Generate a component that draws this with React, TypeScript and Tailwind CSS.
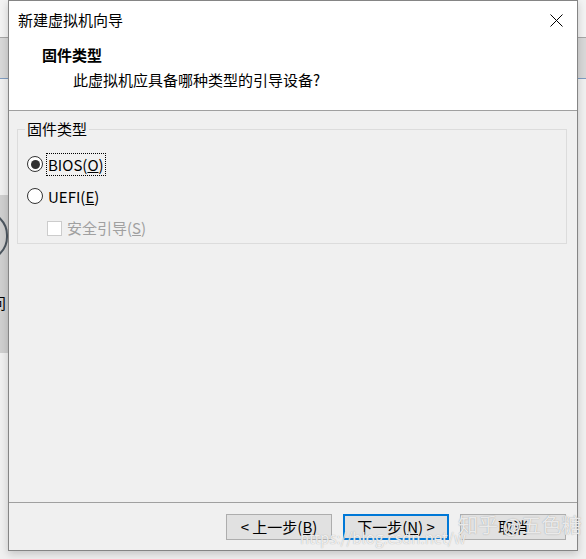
import React from "react";

const font = { fontFamily: '"Noto Sans CJK SC", "Noto Sans", sans-serif' };

function Radio({ checked, label, focused }: { checked: boolean; label: React.ReactNode; focused?: boolean }) {
  return (
    <div className="h-[32px] flex items-center">
      <span className="w-[16px] h-[16px] rounded-full border border-[#333] bg-white flex items-center justify-center">
        {checked ? <span className="w-[9px] h-[9px] rounded-full bg-[#333]" /> : null}
      </span>
      <span
        className={
          "ml-[3px] px-[1px] leading-[21px] " +
          (focused ? "border border-dotted border-black" : "border border-transparent")
        }
      >
        {label}
      </span>
    </div>
  );
}

function Btn({ children, primary }: { children: React.ReactNode; primary?: boolean }) {
  return (
    <button
      className={
        "w-[106px] h-[26px] bg-[#e1e1e1] text-[15px] leading-[20px] text-black flex items-center justify-center " +
        (primary ? "border-2 border-[#0078d7]" : "border border-[#adadad]")
      }
    >
      {children}
    </button>
  );
}

export default function App() {
  return (
    <div className="relative w-[586px] h-[559px] overflow-hidden bg-[#f3f3f3] text-black" style={font}>
      {/* desktop behind the dialog */}
      <div className="absolute left-0 top-[37px] w-full h-[42px] bg-[#d8d8d8] border-t border-[#a6a6a6] border-b border-b-[#7f9cc0]" />
      <div className="absolute left-0 top-[79px] w-full h-[480px] bg-[#f0f0f0]" />
      <div className="absolute left-0 top-[195px] w-[8px] h-[158px] bg-[#cfcfcf] overflow-hidden">
        <div className="absolute left-[-40px] top-[16px] w-[48px] h-[50px] rounded-full border-2 border-[#4d5760]" />
        <span className="absolute left-[-9px] top-[98px] text-[15px] leading-[20px]">问</span>
      </div>

      {/* dialog */}
      <div className="absolute left-[8px] top-0 w-[570px] h-[551px] border border-[#858585] bg-[#f0f0f0] flex flex-col shadow-[0_3px_8px_rgba(0,0,0,0.18)]">
        <div className="relative h-[109px] bg-white">
          <div className="h-[38px] flex items-center pl-[9px] text-[15px]">新建虚拟机向导</div>
          <svg className="absolute right-[14px] top-[13px]" width="13" height="13" viewBox="0 0 13 13">
            <path d="M0.5 0.5 L12.5 12.5 M12.5 0.5 L0.5 12.5" stroke="#000" strokeWidth="1" fill="none" />
          </svg>
          <div className="mt-[6px] pl-[33px] text-[15px] leading-[20px] font-bold">固件类型</div>
          <div className="mt-[5px] pl-[64px] text-[15px] leading-[20px]">此虚拟机应具备哪种类型的引导设备?</div>
        </div>
        <div className="h-px bg-[#a0a0a0]" />

        <div className="flex-1 pl-[8px] pr-[10px] pt-[18px]">
          <div className="relative h-[115px] border border-[#dcdcdc] pl-[9px] pt-[18px] text-[15px]">
            <span className="absolute -top-[11px] left-[7px] bg-[#f0f0f0] px-[2px] leading-[20px]">固件类型</span>
            <Radio checked focused label={<>BIOS(<u>O</u>)</>} />
            <Radio checked={false} label={<>UEFI(<u>E</u>)</>} />
            <div className="h-[32px] flex items-center pl-[20px] text-[#a0a0a0]">
              <span className="w-[15px] h-[15px] border border-[#cccccc] bg-white" />
              <span className="ml-[5px] leading-[20px]">
                安全引导(<u>S</u>)
              </span>
            </div>
          </div>
        </div>

        <div className="h-px bg-[#a0a0a0]" />
        <div className="h-[47px] flex justify-end items-start gap-[11px] pt-[11px] pr-[11px]">
          <Btn>
            &lt; 上一步(<u>B</u>)
          </Btn>
          <Btn primary>
            下一步(<u>N</u>) &gt;
          </Btn>
          <Btn>取消</Btn>
        </div>
      </div>

      {/* watermark */}
      <div className="absolute left-[300px] top-[528px] text-[15px] leading-[20px] text-white/80 [text-shadow:0_0_1px_#9a9a9a]">
        https://blog.csdn.net/w
      </div>
      <div className="absolute left-[458px] top-[511px] text-[20px] leading-[28px] text-white/80 [text-shadow:0_0_1px_#8a8a8a]">
        知乎 @五色糖
      </div>
    </div>
  );
}
